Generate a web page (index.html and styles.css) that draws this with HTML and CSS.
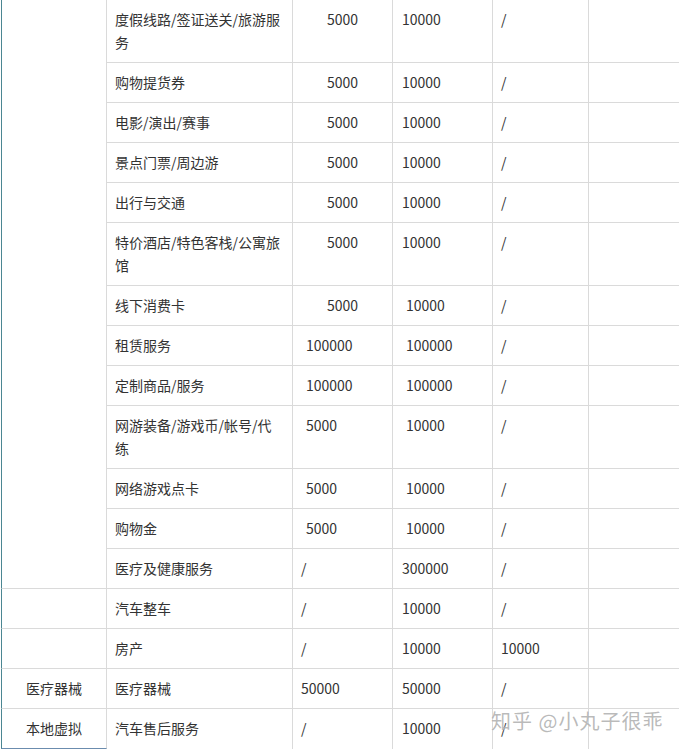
FILE: index.html
```html
<!DOCTYPE html>
<html lang="zh-CN">
<head>
<meta charset="utf-8">
<title>类目保证金</title>
<link rel="stylesheet" href="styles.css">
</head>
<body>
<div class="page">
  <table class="deposit">
    <colgroup>
      <col class="c1"><col class="c2"><col class="c3"><col class="c4"><col class="c5"><col class="c6">
    </colgroup>
    <tbody>
      <tr>
        <td class="cat" rowspan="13"></td>
        <td>度假线路/签证送关/旅游服<br>务</td>
        <td class="ctr">5000</td>
        <td class="n4">10000</td>
        <td>/</td>
        <td></td>
      </tr>
      <tr><td>购物提货券</td><td class="ctr">5000</td><td class="n4">10000</td><td>/</td><td></td></tr>
      <tr><td>电影/演出/赛事</td><td class="ctr">5000</td><td class="n4">10000</td><td>/</td><td></td></tr>
      <tr><td>景点门票/周边游</td><td class="ctr">5000</td><td class="n4">10000</td><td>/</td><td></td></tr>
      <tr><td>出行与交通</td><td class="ctr">5000</td><td class="n4">10000</td><td>/</td><td></td></tr>
      <tr><td>特价酒店/特色客栈/公寓旅<br>馆</td><td class="ctr">5000</td><td class="n4">10000</td><td>/</td><td></td></tr>
      <tr><td>线下消费卡</td><td class="ctr">5000</td><td class="n4 sp">10000</td><td>/</td><td></td></tr>
      <tr><td>租赁服务</td><td class="sp">100000</td><td class="n4 sp">100000</td><td>/</td><td></td></tr>
      <tr><td>定制商品/服务</td><td class="sp">100000</td><td class="n4 sp">100000</td><td>/</td><td></td></tr>
      <tr><td>网游装备/游戏币/帐号/代<br>练</td><td class="sp">5000</td><td class="n4 sp">10000</td><td>/</td><td></td></tr>
      <tr><td>网络游戏点卡</td><td class="sp">5000</td><td class="n4 sp">10000</td><td>/</td><td></td></tr>
      <tr><td>购物金</td><td class="sp">5000</td><td class="n4 sp">10000</td><td>/</td><td></td></tr>
      <tr><td>医疗及健康服务</td><td>/</td><td class="n4">300000</td><td>/</td><td></td></tr>
      <tr><td class="cat"></td><td>汽车整车</td><td>/</td><td class="n4">10000</td><td>/</td><td></td></tr>
      <tr><td class="cat"></td><td>房产</td><td>/</td><td class="n4">10000</td><td>10000</td><td></td></tr>
      <tr><td class="cat">医疗器械</td><td>医疗器械</td><td>50000</td><td class="n4">50000</td><td>/</td><td></td></tr>
      <tr class="last"><td class="cat">本地虚拟</td><td>汽车售后服务</td><td>/</td><td class="n4">10000</td><td>/</td><td></td></tr>
    </tbody>
  </table>
  <div class="watermark">知乎 @小丸子很乖</div>
</div>
</body>
</html>
```

FILE: styles.css
```css
html, body {
  margin: 0;
  padding: 0;
  background: #ffffff;
  overflow: hidden;
}

.page {
  position: relative;
  width: 679px;
  height: 750px;
  overflow: hidden;
}

.deposit {
  margin-left: 1px;
  width: 690px;
  table-layout: fixed;
  border-collapse: separate;
  border-spacing: 0;
  font-family: "Noto Sans CJK SC", "Microsoft YaHei", sans-serif;
  font-size: 14px;
  line-height: 23px;
  color: #333333;
}

.c1 { width: 106px; }
.c2 { width: 186px; }
.c3 { width: 100px; }
.c4 { width: 100px; }
.c5 { width: 96px; }
.c6 { width: 102px; }

.deposit td {
  padding: 8px 8px 8px 8px;
  vertical-align: top;
  text-align: left;
  border-right: 1px solid #dadada;
  border-bottom: 1px solid #dadada;
  white-space: nowrap;
  box-sizing: border-box;
}

.deposit td.cat {
  border-left: 1px solid #4b8692;
  text-align: center;
}

.deposit td.ctr {
  text-align: center;
}

.deposit td.n4 {
  padding-left: 9px;
}

.deposit td.sp {
  padding-left: 13px;
}

.deposit tr.last td {
  border-bottom: none;
}

.deposit tr.last td.cat {
  border-bottom: 1px solid #6b8cae;
}

.watermark {
  position: absolute;
  left: 491px;
  top: 709px;
  font-family: "Noto Sans CJK SC", sans-serif;
  font-size: 20px;
  line-height: 24px;
  color: rgba(140, 140, 140, 0.6);
  text-shadow: 0 0 1px rgba(255, 255, 255, 0.8);
  white-space: nowrap;
  letter-spacing: 1px;
}
```
